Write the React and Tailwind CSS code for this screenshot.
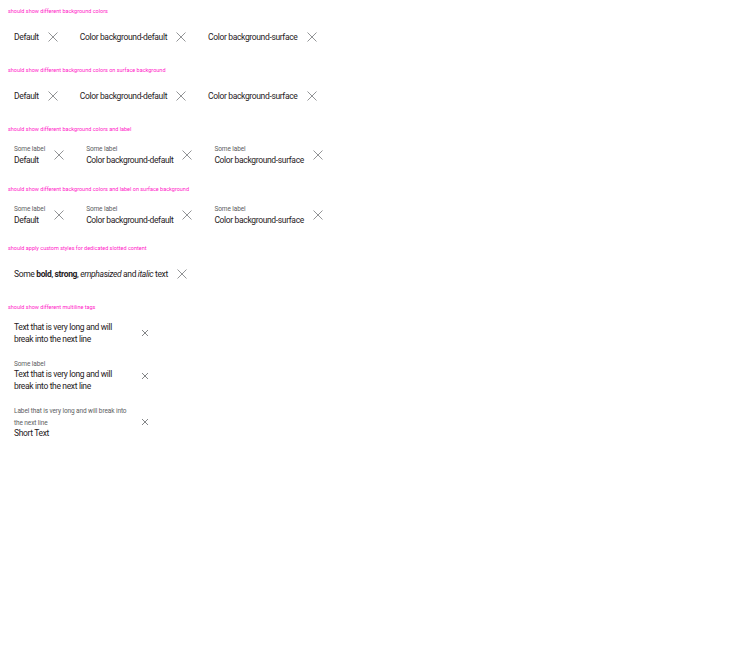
const font = { fontFamily: '"Liberation Sans Narrow", Roboto, sans-serif' }

function XIcon({ small }) {
  return (
    <svg viewBox="0 0 12 12" className="w-[12px] h-[12px] shrink-0 text-[#76787b]">
      {small ? (
        <path d="M3 3l6 6M9 3l-6 6" stroke="currentColor" strokeWidth="0.9" fill="none" />
      ) : (
        <path d="M1.5 1.5l9 9M10.5 1.5l-9 9" stroke="currentColor" strokeWidth="0.8" fill="none" />
      )}
    </svg>
  )
}

function Tag({ label, children, small, wide, labelLeading = 'leading-[10px]', className = '' }) {
  return (
    <div className={`inline-flex items-center gap-[8px] pl-[6px] pr-[2px] py-[2px] bg-white ${className}`}>
      <div className={wide ? 'w-[117px]' : ''}>
        {label && (
          <div className={`text-[6.5px] tracking-[-0.1px] text-[#5c5e61] ${labelLeading}`}>{label}</div>
        )}
        <div className="text-[8.5px] tracking-[-0.35px] leading-[12px] text-[#1f2124]">{children}</div>
      </div>
      <XIcon small={small} />
    </div>
  )
}

function Section({ title, children, last }) {
  return (
    <div className={last ? '' : 'mb-[16.2px]'}>
      <div className="text-[5.5px] leading-[6px] text-[#ff20c8]">{title}</div>
      <div className="mt-[9px]">{children}</div>
    </div>
  )
}

function Row({ children }) {
  return <div className="flex items-center gap-[13px] h-[28px]">{children}</div>
}

export default function App() {
  return (
    <div className="min-h-[671px] bg-white p-[8px]" style={font}>
      <Section title="should show different background colors">
        <Row>
          <Tag>Default</Tag>
          <Tag>Color background-default</Tag>
          <Tag>Color background-surface</Tag>
        </Row>
      </Section>
      <Section title="should show different background colors on surface background">
        <Row>
          <Tag>Default</Tag>
          <Tag>Color background-default</Tag>
          <Tag>Color background-surface</Tag>
        </Row>
      </Section>
      <Section title="should show different background colors and label">
        <Row>
          <Tag label="Some label">Default</Tag>
          <Tag label="Some label">Color background-default</Tag>
          <Tag label="Some label">Color background-surface</Tag>
        </Row>
      </Section>
      <Section title="should show different background colors and label on surface background">
        <Row>
          <Tag label="Some label">Default</Tag>
          <Tag label="Some label">Color background-default</Tag>
          <Tag label="Some label">Color background-surface</Tag>
        </Row>
      </Section>
      <Section title="should apply custom styles for dedicated slotted content">
        <Row>
          <Tag>
            Some <b>bold</b>, <strong>strong</strong>, <em>emphasized</em> and <i>italic</i> text
          </Tag>
        </Row>
      </Section>
      <Section title="should show different multiline tags" last>
        <div className="flex flex-col items-start">
          <Tag small wide className="mb-[11px]">
            Text that is very long and will<br />break into the next line
          </Tag>
          <Tag small wide labelLeading="leading-[8px]" label="Some label" className="mb-[9px]">
            Text that is very long and will<br />break into the next line
          </Tag>
          <div className="inline-flex items-center gap-[8px] pl-[6px] pr-[2px] py-[2px] bg-white">
            <div className="w-[117px]">
              <div className="text-[6.5px] tracking-[-0.1px] leading-[12px] text-[#5c5e61]">
                Label that is very long and will break into<br />the next line
              </div>
              <div className="text-[8.5px] tracking-[-0.35px] leading-[12px] -mt-[2px] text-[#1f2124]">Short Text</div>
            </div>
            <XIcon small />
          </div>
        </div>
      </Section>
    </div>
  )
}
